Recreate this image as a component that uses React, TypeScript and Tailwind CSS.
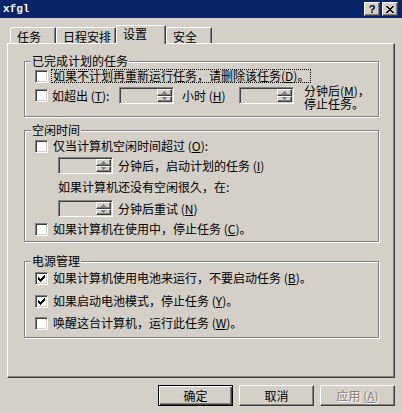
import React from "react";

const FONT = "font-['Noto_Sans_CJK_SC','Noto_Sans_CJK_JP',sans-serif]";

function Check({ checked }: { checked?: boolean }) {
  const cols = [2, 3, 4, 3, 2, 1, 0];
  return (
    <span className="box-border w-[13px] h-[13px] shrink-0 bg-white border border-t-[#808080] border-l-[#808080] border-r-white border-b-white shadow-[inset_1px_1px_0_#404040,inset_-1px_-1px_0_#d4d0c8] flex items-center justify-center">
      {checked && (
        <svg width="7" height="7" viewBox="0 0 7 7" shapeRendering="crispEdges">
          {cols.map((y, x) => (
            <rect key={x} x={x} y={y} width="1" height="3" fill="#000" />
          ))}
        </svg>
      )}
    </span>
  );
}

function SpinBtn({ up }: { up?: boolean }) {
  return (
    <div className="box-border flex-1 bg-[#d4d0c8] border border-t-white border-l-white border-r-[#404040] border-b-[#404040] shadow-[inset_-1px_-1px_0_#808080] flex items-center justify-center">
      <svg width="5" height="3" viewBox="0 0 5 3" shapeRendering="crispEdges">
        {up ? (
          <path d="M2 0h1v1h1v1h1v1H0V2h1V1h1z" fill="#808080" />
        ) : (
          <path d="M0 0h5v1H4v1H3v1H2V2H1V1H0z" fill="#808080" />
        )}
      </svg>
    </div>
  );
}

function Spin() {
  return (
    <div className="box-border w-[55px] h-[17px] shrink-0 bg-[#d4d0c8] border border-t-[#808080] border-l-[#808080] border-r-white border-b-white shadow-[inset_1px_1px_0_#404040,inset_-1px_-1px_0_#d4d0c8] flex justify-end p-[1px]">
      <div className="flex flex-col w-[15px]">
        <SpinBtn up />
        <SpinBtn />
      </div>
    </div>
  );
}

function Group({
  title,
  className,
  children,
}: {
  title: string;
  className: string;
  children: React.ReactNode;
}) {
  return (
    <div
      className={
        "relative box-border w-[355px] border border-[#808080] shadow-[1px_1px_0_white,inset_1px_1px_0_white] pl-[10px] flex flex-col " +
        className
      }
    >
      <span className="absolute left-[6px] top-[-7px] px-[1px] bg-[#d4d0c8] whitespace-nowrap">
        {title}
      </span>
      {children}
    </div>
  );
}

function Tab({ label, selected, w }: { label: string; selected?: boolean; w: string }) {
  return (
    <div
      className={
        "box-border bg-[#d4d0c8] border-l border-t border-r border-l-white border-t-white border-r-[#404040] rounded-tl-[2px] rounded-tr-[1px] shadow-[inset_-1px_0_0_#808080] pl-[6px] whitespace-nowrap " +
        w +
        (selected ? " h-[19px] mb-[-1px] relative z-10 pt-[2px]" : " h-[16px] pt-[3px]")
      }
    >
      {label}
    </div>
  );
}

function Btn({ children, def, disabled }: { children: React.ReactNode; def?: boolean; disabled?: boolean }) {
  if (def) {
    return (
      <div className="box-border w-[75px] h-[21px] border border-black bg-[#d4d0c8] shadow-[inset_1px_1px_0_white,inset_-1px_-1px_0_#404040,inset_-2px_-2px_0_#808080] flex items-center justify-center">
        {children}
      </div>
    );
  }
  return (
    <div
      className={
        "box-border w-[75px] h-[21px] border border-t-white border-l-white border-r-[#404040] border-b-[#404040] bg-[#d4d0c8] shadow-[inset_-1px_-1px_0_#808080] flex items-center justify-center " +
        (disabled ? "text-[#808080] [text-shadow:1px_1px_0_white]" : "")
      }
    >
      {children}
    </div>
  );
}

const U = ({ c }: { c: string }) => <span className="underline underline-offset-[1px]">{c}</span>;

export default function App() {
  return (
    <div className={"w-[402px] h-[413px] bg-[#d4d0c8] overflow-hidden text-[12px] leading-[12px] text-black " + FONT}>
      {/* title bar */}
      <div className="h-[18px] bg-[#0a246a] flex items-center justify-between pl-[3px] pr-[4px]">
        <span className="text-white font-bold font-['Liberation_Mono',monospace] text-[11px] leading-[11px]">xfgl</span>
        <div className="flex gap-[2px]">
          <div className="box-border w-[16px] h-[14px] bg-[#d4d0c8] border border-t-white border-l-white border-r-[#404040] border-b-[#404040] shadow-[inset_-1px_-1px_0_#808080] flex items-center justify-center font-bold font-['Liberation_Sans',sans-serif] text-[11px] leading-[11px]">
            ?
          </div>
          <div className="box-border w-[16px] h-[14px] bg-[#d4d0c8] border border-t-white border-l-white border-r-[#404040] border-b-[#404040] shadow-[inset_-1px_-1px_0_#808080] flex items-center justify-center">
            <svg width="8" height="7" viewBox="0 0 8 7" shapeRendering="crispEdges">
              <path d="M0 0h2v1h1v1h2V1h1V0h2v1H7v1H6v1H5v1h1v1h1v1h1v1H6V6H5V5H3v1H2v1H0V6h1V5h1V4h1V3H2V2H1V1H0z" fill="#000" />
            </svg>
          </div>
        </div>
      </div>

      {/* tabs */}
      <div className="h-[25px] pl-[10px] flex items-end">
        <Tab label="任务" w="w-[46px]" />
        <Tab label="日程安排" w="w-[60px]" />
        <Tab label="设置" w="w-[50px]" selected />
        <Tab label="安全" w="w-[46px]" />
      </div>

      {/* panel */}
      <div className="box-border ml-[7px] w-[388px] h-[335px] border border-t-white border-l-white border-r-[#404040] border-b-[#404040] shadow-[inset_-1px_-1px_0_#808080] pl-[16px] flex flex-col">
        <Group title="已完成计划的任务" className="mt-[17px] h-[56px]">
          <div className="mt-[7px] h-[14px] flex items-center">
            <Check />
            <span className="ml-[3px] box-border h-[14px] border border-dotted border-black px-[1px] whitespace-nowrap">
              如果不计划再重新运行任务，请删除该任务(<U c="D" />)。
            </span>
          </div>
          <div className="mt-[4px] h-[17px] flex items-center">
            <Check />
            <span className="ml-[4px] w-[67px] whitespace-nowrap">
              如超出 (<U c="T" />):
            </span>
            <Spin />
            <span className="ml-[8px] w-[57px] whitespace-nowrap">
              小时 (<U c="H" />)
            </span>
            <Spin />
            <div className="ml-[10px] self-start mt-[-2px] flex flex-col gap-[1px] whitespace-nowrap">
              <span className="h-[12px]">
                分钟后(<U c="M" />)，
              </span>
              <span className="h-[12px]">停止任务。</span>
            </div>
          </div>
        </Group>

        <Group title="空闲时间" className="mt-[13px] h-[112px]">
          <div className="mt-[8px] h-[14px] flex items-center">
            <Check />
            <span className="ml-[5px] whitespace-nowrap">
              仅当计算机空闲时间超过 (<U c="O" />):
            </span>
          </div>
          <div className="mt-[4px] h-[17px] flex items-center ml-[23px]">
            <Spin />
            <span className="ml-[5px] whitespace-nowrap">
              分钟后，启动计划的任务 (<U c="I" />)
            </span>
          </div>
          <div className="mt-[7px] h-[12px] ml-[23px] whitespace-nowrap">如果计算机还没有空闲很久，在:</div>
          <div className="mt-[7px] h-[17px] flex items-center ml-[23px]">
            <Spin />
            <span className="ml-[5px] whitespace-nowrap">
              分钟后重试 (<U c="N" />)
            </span>
          </div>
          <div className="mt-[5px] h-[14px] flex items-center">
            <Check />
            <span className="ml-[5px] whitespace-nowrap">
              如果计算机在使用中，停止任务 (<U c="C" />)。
            </span>
          </div>
        </Group>

        <Group title="电源管理" className="mt-[19px] h-[77px]">
          <div className="mt-[9px] h-[14px] flex items-center">
            <Check checked />
            <span className="ml-[5px] whitespace-nowrap">
              如果计算机使用电池来运行，不要启动任务 (<U c="B" />)。
            </span>
          </div>
          <div className="mt-[9px] h-[14px] flex items-center">
            <Check checked />
            <span className="ml-[5px] whitespace-nowrap">
              如果启动电池模式，停止任务 (<U c="Y" />)。
            </span>
          </div>
          <div className="mt-[8px] h-[14px] flex items-center">
            <Check />
            <span className="ml-[5px] whitespace-nowrap">
              唤醒这台计算机，运行此任务 (<U c="W" />)。
            </span>
          </div>
        </Group>
      </div>

      {/* buttons */}
      <div className="mt-[7px] pr-[7px] flex justify-end gap-[6px]">
        <Btn def>确定</Btn>
        <Btn>取消</Btn>
        <Btn disabled>
          应用 (<U c="A" />)
        </Btn>
      </div>
    </div>
  );
}
